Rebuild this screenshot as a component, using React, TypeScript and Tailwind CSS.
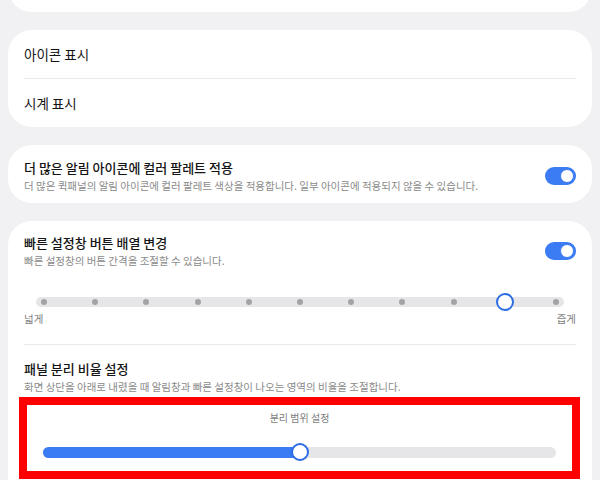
const stops = Array.from({ length: 11 }, (_, i) => i)

function Toggle() {
  return (
    <div className="flex h-[18px] w-[31px] shrink-0 items-center justify-end rounded-full bg-[#3b7bf3] px-[2px]">
      <div className="h-[14px] w-[14px] rounded-full border border-[#3b7bf3] bg-white" />
    </div>
  )
}

function Divider() {
  return <div className="h-px bg-[#e9e9eb]" />
}

export default function App() {
  const selected = 9

  return (
    <div className="flex h-[480px] flex-col gap-[18px] overflow-hidden bg-[#f1f1f3] px-2 font-['Noto_Sans_CJK_KR',sans-serif] text-[#141414]">
      {/* card cut off at the top */}
      <div className="-mt-[40px] h-[52px] shrink-0 rounded-[24px] bg-white" />

      {/* icon / clock */}
      <div className="shrink-0 rounded-[24px] bg-white px-4">
        <div className="flex h-[48px] items-center text-[13.5px]">아이콘 표시</div>
        <Divider />
        <div className="flex h-[48px] items-center text-[13.5px]">시계 표시</div>
      </div>

      {/* color palette */}
      <div className="flex shrink-0 items-center gap-4 rounded-[24px] bg-white px-4 pt-[14px] pb-[10px]">
        <div className="flex-1">
          <div className="text-[13px] font-medium leading-[18px]">더 많은 알림 아이콘에 컬러 팔레트 적용</div>
          <div className="mt-[2px] text-[10.5px] leading-[14px] text-[#8a8a8a]">
            더 많은 퀵패널의 알림 아이콘에 컬러 팔레트 색상을 적용합니다. 일부 아이콘에 적용되지 않을 수 있습니다.
          </div>
        </div>
        <Toggle />
      </div>

      {/* quick panel layout */}
      <div className="shrink-0 rounded-[24px] bg-white px-4 pt-[13px] pb-6">
        <div className="flex items-center gap-4">
          <div className="flex-1">
            <div className="text-[13px] font-medium leading-[18px]">빠른 설정창 버튼 배열 변경</div>
            <div className="mt-[2px] text-[10.5px] leading-[14px] text-[#8a8a8a]">
              빠른 설정창의 버튼 간격을 조절할 수 있습니다.
            </div>
          </div>
          <Toggle />
        </div>

        <div className="mx-3 mt-[25px] flex h-[18px] items-center">
          <div className="flex h-[10px] flex-1 items-center justify-between rounded-full bg-[#e6e6e8] px-[5px]">
            {stops.map((i) => (
              <div key={i} className="flex h-[6px] w-[6px] items-center justify-center">
                {i === selected ? (
                  <div className="h-[18px] w-[18px] shrink-0 rounded-full border-2 border-[#2c6de3] bg-white" />
                ) : (
                  <div className="h-[6px] w-[6px] shrink-0 rounded-full bg-[#a3a3a5]" />
                )}
              </div>
            ))}
          </div>
        </div>
        <div className="mt-[2px] flex justify-between text-[10.5px] leading-[12px] text-[#7d7d7d]">
          <span>넓게</span>
          <span>즙게</span>
        </div>

        <div className="mt-[19px]">
          <Divider />
        </div>

        <div className="mt-[15px] text-[13px] font-medium leading-[18px]">패널 분리 비율 설정</div>
        <div className="mt-[2px] text-[10.5px] leading-[14px] text-[#8a8a8a]">
          화면 상단을 아래로 내렸을 때 알림창과 빠른 설정창이 나오는 영역의 비율을 조절합니다.
        </div>

        <div className="-mr-[4px] -ml-[5px] mt-[3px] border-[8px] border-[#ff0000] bg-white px-4 pt-[6px] pb-[10px]">
          <div className="text-center text-[10px] leading-[14px] text-[#7d7d7d]">분리 범위 설정</div>
          <div className="mt-[18px] flex h-[18px] items-center">
            <div className="relative h-[11px] flex-1 rounded-full bg-[#e6e6e8]">
              <div className="h-full w-1/2 rounded-full bg-[#3b7bf3]" />
              <div className="absolute top-1/2 left-1/2 h-[18px] w-[18px] -translate-x-1/2 -translate-y-1/2 rounded-full border-2 border-[#2c6de3] bg-white" />
            </div>
          </div>
        </div>
      </div>
    </div>
  )
}
